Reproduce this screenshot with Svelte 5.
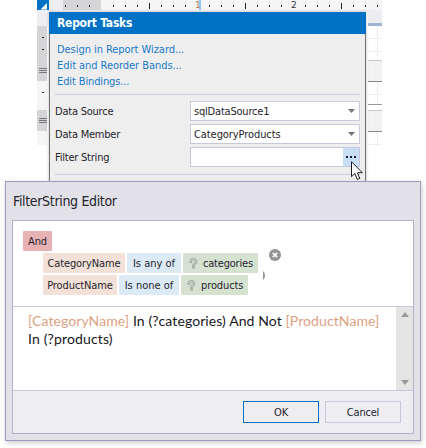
<script>
  const ticks = Array.from({ length: 27 }, (_, i) => {
    if (i === 11) return '1';
    if (i === 19) return '2';
    if (i === 3) return 'none';
    return i === 7 || i === 15 || i === 23 ? 'major' : 'minor';
  });
  const links = [
    ['Design in Report Wizard...', 'l1'],
    ['Edit and Reorder Bands...', 'l2'],
    ['Edit Bindings...', 'l3']
  ];
  const conditions = [
    { field: 'CategoryName', op: 'Is any of', param: 'categories', id: 'a' },
    { field: 'ProductName', op: 'Is none of', param: 'products', id: 'b' }
  ];
</script>

<div class="stage">
  <div class="designer">
    <div class="ruler">
      <div class="corner"><svg width="12" height="10"><path d="M10 3v6.500H3.500z" fill="#fff" /></svg></div>
      <div class="ticks">
        {#each ticks as t}
          <div class="cell">
            {#if t === '1' || t === '2'}<span class="num n{t}">{t}</span>
            {:else if t !== 'none'}<i class={t}></i>{/if}
          </div>
        {/each}
      </div>
    </div>
    <div class="body">
      <div class="left">
        <div class="v0"></div>
        <div class="v1"><i></i><i></i><b></b></div>
        <div class="v2"><i></i></div>
        <div class="v3"><b></b></div>
        <div class="v4"><i></i></div>
      </div>
      <div class="right">
        <div class="r0"></div>
        <div class="r1"></div>
        <div class="grid g1"></div>
        <div class="band"></div>
        <div class="grid g2"></div>
        <div class="space"></div>
        <div class="band"></div>
        <div class="grid g3"></div>
      </div>
    </div>
  </div>

  <section class="popup">
    <header><span>Report Tasks</span></header>
    <div class="tasks">
      <nav>{#each links as [text, c]}<a href="#top" class={c}>{text}</a>{/each}</nav>
      <hr />
      <div class="row"><label for="ds">Data Source</label><div id="ds" class="combo"><span class="sql">sqlDataSource1</span><svg width="7" height="4"><path d="M0 0h7L3.500 4z" fill="#777" /></svg></div></div>
      <div class="row"><label for="dm">Data Member</label><div id="dm" class="combo"><span class="cp">CategoryProducts</span><svg width="7" height="4"><path d="M0 0h7L3.500 4z" fill="#777" /></svg></div></div>
      <div class="row"><label for="fs">Filter String</label><div id="fs" class="combo"><span></span><div class="more"><i></i><i></i><i></i></div></div></div>
      <hr class="second" />
    </div>
  </section>
  <section class="dialog">
    <h1><span>FilterString Editor</span></h1>
    <div class="panel">
      <div class="tree">
        <div class="line"><div class="chip and">And</div></div>
        {#each conditions as c}
          <div class="line nested {c.id}">
            <div class="chip field"><span>{c.field}</span></div>
            <div class="chip op"><span>{c.op}</span></div>
            <div class="chip param">
              <svg width="9" height="11" viewBox="0 0 9 11" fill="none">
                <path d="M1.700 3.700A2.700 2.300 0 1 1 6.200 5.300Q4.500 6.200 4.500 7M4.500 9v.5" stroke="#9ea99c" stroke-width="2.600" stroke-linecap="square" stroke-linejoin="round" />
                <path d="M1.700 4.200v-.5A2.700 2.300 0 1 1 6.200 5.300Q4.500 6.200 4.500 7.200M4.500 9v.7" stroke="#d6e2d1" stroke-width=".9" />
              </svg>
              <span>{c.param}</span>
            </div>
          </div>
        {/each}
        <svg class="remove" width="12" height="12"><circle cx="6" cy="6" r="6" fill="#929292" /><path d="M3.800 3.800l4.400 4.400M8.200 3.800L3.800 8.200" stroke="#fff" stroke-width="1.700" /></svg>
        <svg class="sliver" width="2" height="9"><path d="M0 0q2 1.500 2 4.500T0 9z" fill="#929292" /></svg>
      </div>
      <div class="expression">
        <div class="code"><div class="c1"><em>[CategoryName]</em> In (?categories) And Not <em>[ProductName]</em></div><div class="c2">In (?products)</div></div>
        <div class="scroll"><svg width="8" height="5"><path d="M0 5h8L4 0z" fill="#999" /></svg><svg width="8" height="5"><path d="M0 0h8L4 5z" fill="#999" /></svg></div>
      </div>
      <footer><button class="ok">OK</button><button class="cancel">Cancel</button></footer>
    </div>
  </section>
  <svg class="cursor" width="13" height="20" viewBox="0 0 13 20"><path d="M.5.700v15l3.400-3.300 2.400 6 2.500-1-2.400-5.700h4.900z" fill="#fff" stroke="#1c1c28" /></svg>
</div>

<style>
  :global(body) { margin: 0; background: #fff; }
  .stage { position: relative; width: 426px; height: 448px; overflow: hidden; background: #fff; font: 11px/16px 'DejaVu Sans Condensed', 'DejaVu Sans', sans-serif; font-stretch: condensed; color: #25252d; white-space: nowrap; }
  .stage * { box-sizing: border-box; }
  .designer { width: 345px; margin-left: 37px; }
  .ruler { display: flex; height: 10px; background: #eeeef2; }
  .corner { flex: none; width: 12px; height: 10px; background: #0072c6; margin-right: 14px; }
  .corner svg { display: block; }
  .ticks { display: flex; width: 319px; overflow: hidden; background: linear-gradient(90deg, #d5d5d7 38px, #f5f5f5 38px); }
  .cell { flex: 0 0 12px; display: flex; padding-left: 2px; align-items: flex-start; }
  .cell .minor { width: 1px; height: 2px; margin-top: 5px; background: #222; }
  .cell .major { width: 1px; height: 6px; margin-top: 3px; background: #222; }
  .num { margin-left: -2px; font: 9px/11px 'DejaVu Sans', sans-serif; color: #32304c; }
  .n1 { color: #b27b48; box-shadow: inset -2px 0 #91c5fa; }
  .body { display: flex; justify-content: space-between; background: linear-gradient(#eeeef2 2px, transparent 2px); }
  .left { display: flex; flex-direction: column; width: 10px; }
  .left div { display: flex; flex-direction: column; align-items: center; }
  .left .v0 { height: 16px; width: 12px; background: #eeeef2; }
  .v1 { height: 55px; background: #d5d5d7; padding-top: 11px; }
  .left i { width: 2px; height: 1px; background: #222; margin-bottom: 11px; margin-left: 2px; }
  .left b { width: 8px; height: 5px; margin-left: 2px; border: solid #77777a; border-width: 1px 0; background: linear-gradient(transparent 1px, #77777a 1px, #77777a 2px, transparent 2px); }
  .v1 b { margin-top: 7px; }
  .v2 { height: 29px; background: #f5f5f5; padding-top: 11px; }
  .v3 { height: 21px; background: #d5d5d7; padding-top: 8px; }
  .v4 { height: 14px; background: #f5f5f5; padding-top: 11px; }
  .right { width: 14px; }
  .r0 { height: 13px; background: #ededf1; }
  .r1 { height: 3px; background: #9fb4d2; }
  .grid { background: linear-gradient(90deg, transparent 9px, #eee 9px, #eee 10px, transparent 10px), repeating-linear-gradient(transparent 0 12px, #eee 12px 13px); }
  .g1 { height: 34px; }
  .band { background: #f2f2f2; border-top: 1px solid #c8c8c8; border-bottom: 1px solid #888; height: 22px; }
  .g2 { height: 23px; border-bottom: 1px solid #999; }
  .space { height: 5px; }
  .g3 { height: 14px; }
  .popup { position: absolute; left: 49px; top: 12px; width: 317px; height: 170px; background: #eee; box-shadow: 0 0 3px #bbb; }
  header { height: 22px; background: #0072c6; color: #fff; font: bold 12px/23px 'DejaVu Sans Condensed', sans-serif; letter-spacing: -.25px; padding-left: 8px; }
  .tasks { height: 148px; border: solid #707070; border-width: 0 1px; padding: 8px 5px 0; display: flex; flex-direction: column; }
  nav { display: flex; flex-direction: column; padding-left: 2px; }
  a { color: #1878ca; text-decoration: none; letter-spacing: -.05px; }
  .l3 { letter-spacing: -.12px; }
  hr { width: 305px; height: 1px; border: 0; margin: 4px 0 6px; background: #cbcbde; flex: none; }
  .row { display: flex; justify-content: space-between; align-items: center; height: 20px; margin-bottom: 3px; }
  label { padding-top: 1px; letter-spacing: -.22px; }
  .combo { width: 170px; height: 20px; border: 1px solid #c8c8dc; background: #fff; display: flex; align-items: center; justify-content: space-between; padding: 0 4px 0 3px; }
  .combo > span { padding-top: 1px; }
  .sql { letter-spacing: -.2px; }
  .cp { letter-spacing: -.08px; }
  #fs { padding: 0; }
  .more { width: 16px; height: 18px; background: #c8def5; display: flex; justify-content: center; align-items: center; gap: 2px; }
  .more i { width: 2px; height: 2px; background: #1d1d28; }
  hr.second { margin: 4px 0 0; }
  .dialog { position: absolute; left: 5px; top: 181px; width: 416px; height: 260px; border: 1px solid #9b9bc0; background: #e2e1e7; box-shadow: 1px 2px 5px #ccc; padding: 0 6px 6px; display: flex; flex-direction: column; }
  h1 { margin: 0; height: 38px; padding: 10px 0 0 1px; font: 14px/18px 'DejaVu Sans Condensed', sans-serif; letter-spacing: -.33px; }
  .panel { flex: 1; border: 1px solid #b2b2c8; background: #fff; display: flex; flex-direction: column; }
  .tree { position: relative; height: 85px; padding: 10px 0 0 10px; display: flex; flex-direction: column; gap: 2px; }
  .line { display: flex; gap: 2px; height: 20px; }
  .nested { padding-left: 20px; }
  .chip { height: 20px; line-height: 21px; padding-top: 1px; border-radius: 1px; display: flex; align-items: center; justify-content: center; letter-spacing: -.1px; }
  .and { width: 29px; background: #e7b2b4; }
  .field { background: #f3e0d8; }
  .op { background: #dceaf6; }
  .op span { letter-spacing: 0; }
  .param { background: #d6e2d1; justify-content: flex-start; padding-left: 6px; gap: 5px; }
  .a .field { width: 82px; } .a .op { width: 54px; } .a .param { width: 75px; letter-spacing: -.2px; }
  .b .field { width: 74px; } .b .op { width: 60px; } .b .param { width: 67px; }
  .remove { position: absolute; left: 256px; top: 28px; }
  .sliver { position: absolute; left: 250px; top: 50px; }
  .expression { height: 85px; border: solid #c8c8dc; border-width: 1px 0; display: flex; justify-content: space-between; }
  .code { padding: 5px 0 0 15px; font: 14px/18px Lato, sans-serif; color: #17171c; }
  .c1 { letter-spacing: .09px; }
  .c2 { letter-spacing: .15px; }
  em { font-style: normal; color: #dda181; }
  .scroll { width: 17px; background: #e4e4e4; display: flex; flex-direction: column; align-items: center; justify-content: space-between; padding: 5px 0; }
  footer { flex: 1; background: #ededf2; display: flex; justify-content: flex-end; gap: 6px; padding: 10px 12px 0 0; }
  button { width: 76px; height: 22px; padding: 1px 0 0; border: 1px solid #c8c8da; background: #ededf2; color: inherit; font: inherit; line-height: 20px; font-stretch: condensed; letter-spacing: -.2px; }
  .ok { border-color: #0072c6; }
  .cursor { position: absolute; left: 351px; top: 161px; }
</style>
